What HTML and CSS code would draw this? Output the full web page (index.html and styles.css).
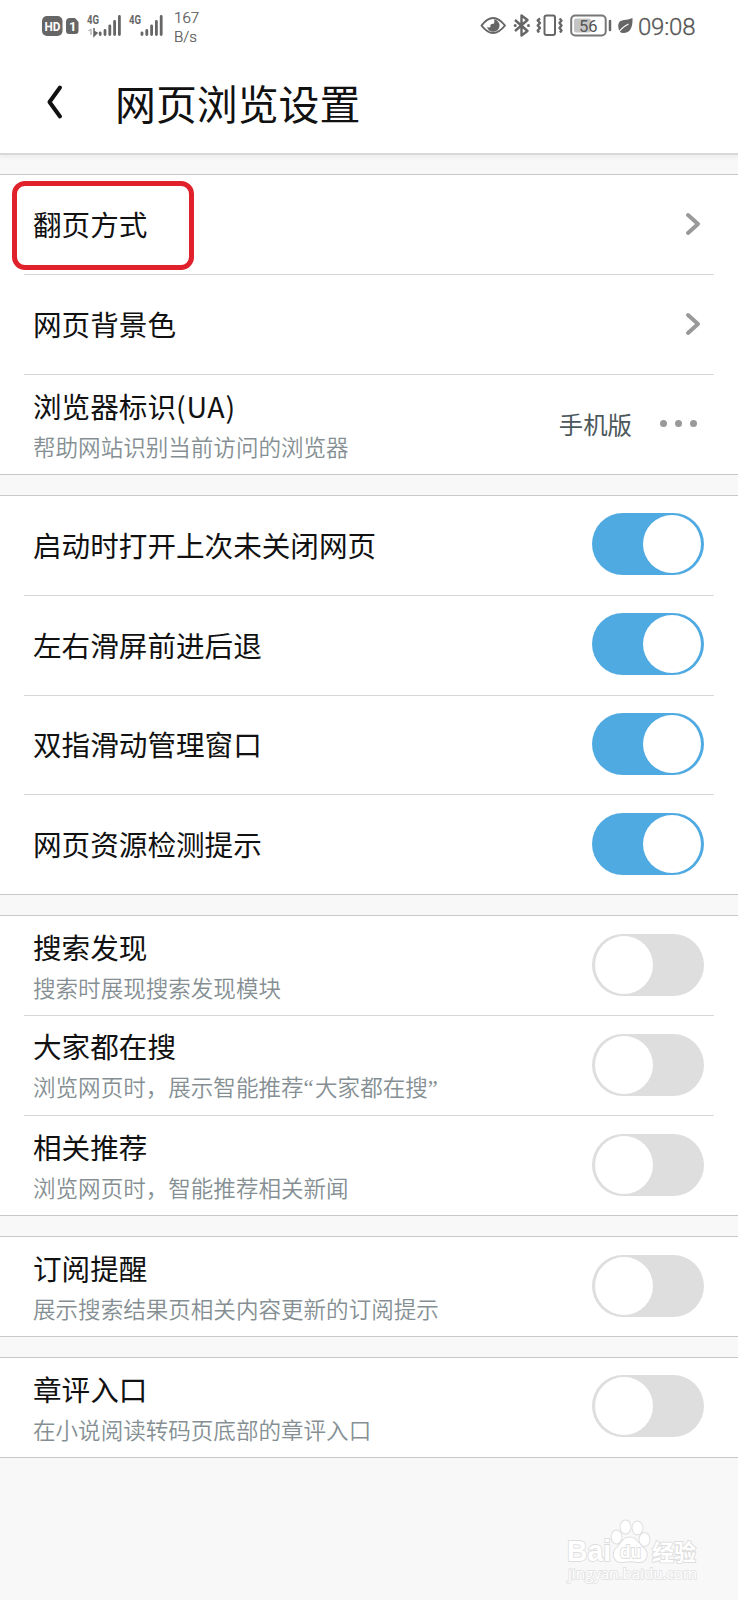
FILE: index.html
```html
<!DOCTYPE html>
<html lang="zh-CN">
<head>
<meta charset="utf-8">
<title>网页浏览设置</title>
<link rel="stylesheet" href="styles.css">
</head>
<body>
<div class="screen">
  <header class="top">
    <div class="status">
      <svg class="status-left" width="124" height="32" viewBox="40 10 124 32">
        <rect x="42" y="16" width="20.500" height="20" rx="5" fill="#666"/>
        <text x="44.500" y="31" class="hd" textLength="16" lengthAdjust="spacingAndGlyphs">HD</text>
        <path d="M70 18H75L78.500 22V31Q78.500 34 75.500 34H69Q66 34 66 31V22Q66 18 70 18Z" fill="#666"/>
        <text x="69" y="31" class="hd">1</text>
        <text x="87" y="24" class="net" textLength="12" lengthAdjust="spacingAndGlyphs">4G</text>
        <path d="M91 29V35M88.500 31L91 29" stroke="#bbb" stroke-width="1.500" fill="none"/>
        <path d="M94 28V36L97 33L94 31.500" stroke="#666" stroke-width="1.500" fill="#666"/>
        <path d="M100.200 33V34.500M105 30.500V34.500M109.800 26V34.500M114.600 21.500V34.500M119.400 16.500V34.500" class="bars"/>
        <text x="129" y="24" class="net" textLength="12" lengthAdjust="spacingAndGlyphs">4G</text>
        <path d="M142 33V34.500M146.800 30.500V34.500M151.600 26V34.500M156.400 21.500V34.500M161.200 16.500V34.500" class="bars"/>
      </svg>
      <div class="speed"><span>167</span><span>B/s</span></div>
      <svg class="status-right" width="154" height="32" viewBox="480 10 154 32">
        <path d="M481.500 25.500Q493 10.500 505 25.500Q493 40.500 481.500 25.500Z" class="thin"/>
        <path d="M494 19.300A6.300 6.300 0 1 1 487 26.500Q488.500 28 490.500 27Q489.800 25.500 491 24.300Q492.500 23.500 493.500 24Q495 21.500 494 19.300Z" fill="#666"/>
        <path d="M515 20L527.500 31L521.500 35.500V15.500L527.500 20L515 31" class="thin heavy"/>
        <circle cx="515.200" cy="25.500" r="1.500" fill="#666"/><circle cx="528.500" cy="25.500" r="1.500" fill="#666"/>
        <rect x="544.500" y="15.500" width="10.500" height="19.500" rx="2" class="thin"/>
        <path d="M540 18.500L537.700 20.500L540 23L537.700 25.500L540 28L537.700 30.500L539 32.500M559.500 18.500L561.500 20.500L559.500 23L561.500 25.500L559.500 28L561.500 30.500L560 32.500" class="thin heavy"/>
        <rect x="571.200" y="15.500" width="34.500" height="20" rx="4" fill="none" stroke="#777" stroke-width="2"/>
        <rect x="574" y="18.500" width="17" height="14" rx="2" fill="#c4c4c4"/>
        <path d="M610 21V30" stroke="#666" stroke-width="2.500" stroke-linecap="round"/>
        <text x="579" y="32" class="charge" textLength="18.500">56</text>
        <path d="M632.500 18Q633 33 623.500 33Q621 33 619.500 31.500Q615.500 21 624 20Q628 20 632.500 18Z" fill="#666"/>
        <path d="M617.500 34Q621 28 628.500 24" stroke="#fff" stroke-width="1.200" fill="none"/>
      </svg>
      <span class="clock">09:08</span>
    </div>
    <div class="titlebar">
      <svg class="back" width="18" height="38" viewBox="0 0 18 38"><path d="M14 4.500L3.500 19L14 33.500" fill="none" stroke="#111" stroke-width="4" stroke-linecap="round" stroke-linejoin="round"/></svg>
      <h1>网页浏览设置</h1>
    </div>
  </header>

  <main class="groups">
    <section class="group">
      <div class="row"><div class="label marked">翻页方式</div><svg class="arrow" width="18" height="26" viewBox="0 0 18 26"><path d="M4 4L14 13L4 22" class="chev"/></svg></div>
      <div class="row"><div class="label">网页背景色</div><svg class="arrow" width="18" height="26" viewBox="0 0 18 26"><path d="M4 4L14 13L4 22" class="chev"/></svg></div>
      <div class="row two"><div class="copy"><div class="label">浏览器标识<span class="latin">(UA)</span></div><div class="desc">帮助网站识别当前访问的浏览器</div></div><span class="value">手机版</span><span class="dots"><i></i><i></i><i></i></span></div>
    </section>
    <section class="group">
      <div class="row"><div class="label">启动时打开上次未关闭网页</div><span class="switch on"></span></div>
      <div class="row"><div class="label">左右滑屏前进后退</div><span class="switch on"></span></div>
      <div class="row"><div class="label">双指滑动管理窗口</div><span class="switch on"></span></div>
      <div class="row"><div class="label">网页资源检测提示</div><span class="switch on"></span></div>
    </section>
    <section class="group">
      <div class="row two"><div class="copy"><div class="label">搜索发现</div><div class="desc">搜索时展现搜索发现模块</div></div><span class="switch"></span></div>
      <div class="row two"><div class="copy"><div class="label">大家都在搜</div><div class="desc">浏览网页时，展示智能推荐<span class="quote">“</span>大家都在搜<span class="quote">”</span></div></div><span class="switch"></span></div>
      <div class="row two"><div class="copy"><div class="label">相关推荐</div><div class="desc">浏览网页时，智能推荐相关新闻</div></div><span class="switch"></span></div>
    </section>
    <section class="group">
      <div class="row two"><div class="copy"><div class="label">订阅提醒</div><div class="desc">展示搜索结果页相关内容更新的订阅提示</div></div><span class="switch"></span></div>
    </section>
    <section class="group">
      <div class="row two"><div class="copy"><div class="label">章评入口</div><div class="desc">在小说阅读转码页底部的章评入口</div></div><span class="switch"></span></div>
    </section>
  </main>

  <svg class="watermark" width="140" height="72" viewBox="560 1515 140 72">
    <g class="outline">
      <text x="567" y="1561" class="wm-big" textLength="44" lengthAdjust="spacingAndGlyphs">Bai</text>
      <ellipse cx="616.500" cy="1537" rx="5" ry="6.500"/>
      <ellipse cx="625.500" cy="1527" rx="5" ry="6.500"/>
      <ellipse cx="637.500" cy="1528" rx="5" ry="6.500"/>
      <ellipse cx="644.500" cy="1539.500" rx="5" ry="6.500"/>
      <path d="M630 1537.500C637 1537.500 639 1545 643.500 1548C650 1554 646 1563 638 1562C632 1561 629 1561 623 1562C614 1563 611 1554 616.500 1548C621 1544 623 1537.500 630 1537.500Z"/>
      <text x="620" y="1558" class="wm-du" textLength="21" lengthAdjust="spacingAndGlyphs">du</text>
      <text x="652" y="1559.500" class="wm-cn" textLength="44" lengthAdjust="spacingAndGlyphs">经验</text>
      <text x="568" y="1579" class="wm-url" textLength="129" lengthAdjust="spacingAndGlyphs">jingyan.baidu.com</text>
    </g>
  </svg>
</div>
</body>
</html>
```
FILE: styles.css
```css
*, *::before, *::after { box-sizing: border-box; }
body { margin: 0; background: #f8f8f8; font-family: "Noto Sans CJK SC", sans-serif; color: #111; }
.screen { position: relative; width: 738px; height: 1600px; overflow: hidden; background: #f8f8f8; }

.top { height: 155px; background: #fff; border-bottom: 2px solid #d8d8d8; box-shadow: 0 2px 5px rgba(0, 0, 0, .06); }
.status { display: flex; align-items: flex-start; height: 52px; padding: 10px 0 0 40px; }
.speed { display: flex; flex-direction: column; width: 60px; margin-left: 10px; font: 300 15.200px/18.500px Roboto, sans-serif; color: #555; -webkit-text-stroke: .2px #555; }
.speed span:first-child { margin-top: -1px; }
.status-right { margin-left: 246px; }
.clock { font: 300 24px/32px Roboto, sans-serif; color: #555; margin-left: 4px; letter-spacing: -.2px; -webkit-text-stroke: .3px #555; padding-top: 1px; }
.hd { font: 700 13px Roboto, sans-serif; fill: #fff; }
.net { font: 700 12px Roboto, sans-serif; fill: #666; }
.charge { font: 400 16.500px Roboto, sans-serif; fill: #555; }
.bars { fill: none; stroke: #666; stroke-width: 2.8; stroke-linecap: round; }
.thin { fill: none; stroke: #666; stroke-width: 2; stroke-linejoin: round; }
.heavy { stroke-width: 2.4; }

.titlebar { display: flex; align-items: center; height: 101px; padding-left: 46px; }
.back { margin-bottom: 1px; }
h1 { margin: 0 0 0 51px; font-size: 40.900px; font-weight: 400; line-height: 60px; }

.groups { display: flex; flex-direction: column; gap: 20px; padding-top: 19px; }
.group { background: #fff; border-top: 1px solid #c8c8c8; border-bottom: 1px solid #c8c8c8; }
.row { display: flex; align-items: center; height: 99.920px; margin: 0 24px; padding: 0 10px 0 9px; border-bottom: 1px solid #d6d6d6; }
.row:last-child { height: 98.920px; border-bottom: 0; }
.label { position: relative; flex: 1; font-size: 28.600px; line-height: 40px; padding-bottom: 1px; }
.latin { letter-spacing: .8px; }
.copy { flex: 1; margin-top: 1px; }
.copy .label { padding: 0; line-height: 38px; }
.desc { font-size: 22.550px; line-height: 34px; color: #858f93; padding-top: 4px; font-weight: 350; }
.quote { font-family: "Liberation Serif", serif; letter-spacing: 1.5px; }
.marked::after { content: ""; position: absolute; left: -21px; top: -23px; width: 182px; height: 89px; border: 5px solid #e0202a; border-radius: 13px; }
.arrow { margin-right: 2px; margin-bottom: 1px; }
.chev { fill: none; stroke: #999; stroke-width: 4; stroke-linecap: round; stroke-linejoin: round; }
.value { font-size: 24.400px; line-height: 36px; color: #4c585c; }
.dots { display: flex; gap: 8px; margin: 0 7px 2px 28px; }
.dots i { width: 7px; height: 7px; border-radius: 50%; background: #999; }

.switch { display: flex; width: 112.500px; height: 62px; padding: 2px 3px; border-radius: 31px; background: #dedede; margin-bottom: 2px; }
.switch::before { content: ""; width: 58px; height: 58px; border-radius: 50%; background: #fff; }
.switch.on { justify-content: flex-end; background: #50aae2; }

.watermark { position: absolute; left: 560px; top: 1515px; }
.outline { fill: #fff; stroke: #dedede; stroke-width: 1.8; paint-order: stroke; }
.wm-big { font: 700 30px "Liberation Sans", sans-serif; }
.wm-du { font: 700 18px "Liberation Sans", sans-serif; }
.wm-cn { font: 700 22px "Noto Sans CJK SC", sans-serif; }
.wm-url { font: 400 15px "Open Sans", sans-serif; stroke: #e4e4e4; }
```
